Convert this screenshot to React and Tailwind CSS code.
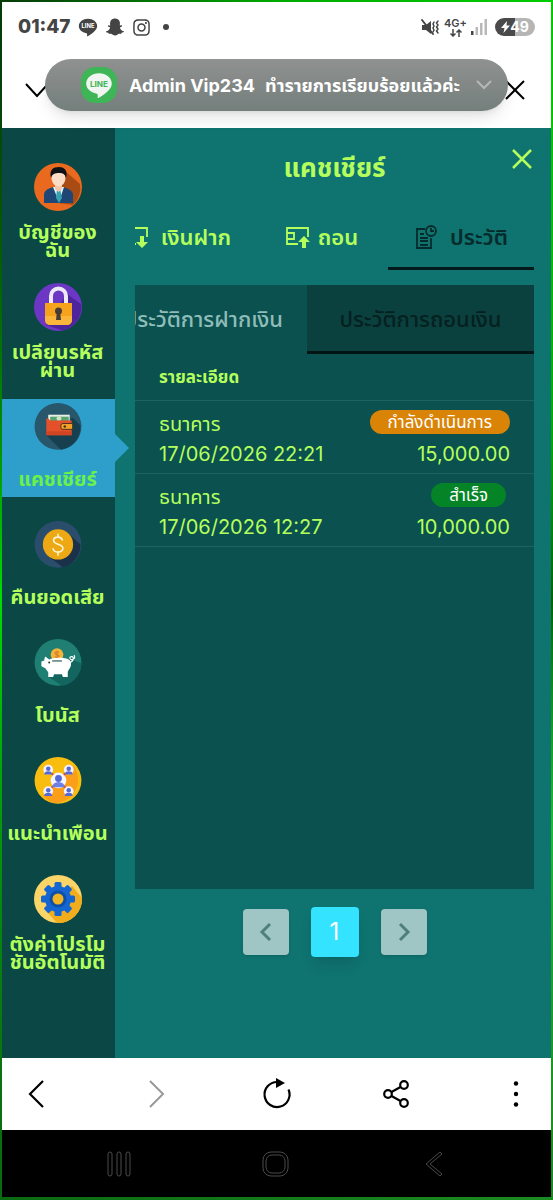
import { Fragment } from 'react'
import { FaSnapchatGhost, FaInstagram } from 'react-icons/fa'

const AccountIcon = () => (
  <svg className="w-12 h-12" viewBox="0 0 48 48">
    <circle cx="24" cy="24" r="24" fill="#e96a1f" />
    <path d="M30 7l16 14a24 24 0 0 1-7 21L16 39z" fill="#a94c13" />
    <path d="M10 40v-8c0-4 3-6 9-8h10c6 2 10 4 10 8v8z" fill="#1f4775" />
    <path d="M19 24h11l-5 15z" fill="#e7f3f5" />
    <path d="M23 26h3l2 9-3 5-3-5z" fill="#35a2b4" />
    <path d="M21 20h7v6l-3.500 3-3.500-3z" fill="#f1c6a8" />
    <ellipse cx="24.500" cy="15" rx="7" ry="8.500" fill="#fbdcc4" />
    <path d="M17 15c-2-8 2-11 8-11s9 4 7 11c-1-4-3-5-7-5s-7 1-8 5z" fill="#0d1114" />
  </svg>
)

const LockIcon = () => (
  <svg className="w-12 h-12" viewBox="0 0 48 48">
    <circle cx="24" cy="24" r="24" fill="#6b37c4" />
    <path d="M33 11l14 10a24 24 0 0 1-18 26.500L12 42z" fill="#4d249c" />
    <path d="M17 22v-9a7.500 7.500 0 0 1 15 0v9" fill="none" stroke="#ece9f5" strokeWidth="4" />
    <path d="M11 20h27v16c0 4-2 6-6 6H17c-4 0-6-2-6-6z" fill="#f5a31c" />
    <path d="M11 33h27v3c0 4-2 6-6 6H17c-4 0-6-2-6-6z" fill="#fbb53a" />
    <circle cx="24.500" cy="28" r="3.500" fill="#463b35" />
    <path d="M23 28h3l1 9h-5z" fill="#463b35" />
  </svg>
)

const WalletIcon = () => (
  <svg className="w-12 h-12" viewBox="0 0 48 48">
    <circle cx="24" cy="24" r="24" fill="#28566a" />
    <path d="M12 33l27-18 8 8a24 24 0 0 1-20 25z" fill="#16404f" />
    <path d="M14 12h22v8H14z" fill="#e9f0e4" />
    <path d="M16 14h19v5H16z" fill="#5ba36e" />
    <circle cx="25" cy="16" r="2.500" fill="#cfe3c7" />
    <path d="M12 16h2l2 2h22v15H13c-1 0-1-1-1-1z" fill="#e4502a" />
    <path d="M12 29h26v4H12z" fill="#cf4422" />
    <path d="M29 21h10v6H29a2 2 0 0 1-2-2v-2a2 2 0 0 1 2-2z" fill="#f0a229" stroke="#54301c" strokeWidth="1" />
    <circle cx="31" cy="24" r="1.300" fill="#54301c" />
  </svg>
)

const CoinIcon = () => (
  <svg className="w-12 h-12" viewBox="0 0 48 48">
    <circle cx="24" cy="24" r="24" fill="#2b4d6c" />
    <path d="M36 14l11 10a24 24 0 0 1-18 23.500L14 36z" fill="#1a3149" />
    <circle cx="24" cy="24" r="15.500" fill="#eda914" />
    <path
      d="M28.500 19.500c-.8-2-2.300-3-4.500-3-2.600 0-4.500 1.300-4.500 3.500 0 5 9.500 2.500 9.500 8 0 2.300-2 3.800-5 3.800-2.800 0-4.500-1.200-5-3.300M24 13.500v3M24 32v3"
      fill="none"
      stroke="#fff4d6"
      strokeWidth="1.600"
      strokeLinecap="round"
    />
  </svg>
)

const PiggyIcon = () => (
  <svg className="w-12 h-12" viewBox="0 0 48 48">
    <circle cx="24" cy="24" r="24" fill="#1f7f73" />
    <path d="M36 20l12 5a24 24 0 0 1-20 23l-15-10z" fill="#13665f" />
    <circle cx="23" cy="16" r="6.500" fill="#f2b53a" />
    <path
      d="M25 14c-1-1.500-4-1.200-4 .5 0 2 4 1 4 3 0 1.800-3.500 1.800-4.200.3M23 12v8"
      fill="none"
      stroke="#d9792a"
      strokeWidth="1.100"
    />
    <path
      d="M11 18l4 3c3-2 16-3 20 0 3 2 3 6 1 9-1 2-2 3-2 4v5h-5l-1-3h-8l-1 3h-5v-5l-3-4-4-2v-5l3-1c0-1 0-2 1-4z"
      fill="#ffffff"
    />
    <path d="M18 22.500h10" stroke="#2a5a54" strokeWidth="1.200" />
    <circle cx="15" cy="24" r="1" fill="#1d2e2c" />
    <path d="M35 24c5 0 6-6 3-6s-2 4 1 3 2-3 1.500-4.500" fill="none" stroke="#ffffff" strokeWidth="1.200" />
  </svg>
)

const friendNodes = [
  { x: 14, y: 13 },
  { x: 35, y: 13 },
  { x: 14, y: 35 },
  { x: 35, y: 35 }
]

const FriendsIcon = () => (
  <svg className="w-12 h-12" viewBox="0 0 48 48">
    <circle cx="24" cy="24" r="24" fill="#f9bd10" />
    <path d="M40 9a24 24 0 0 1-22 38L8 40z" fill="#fb9f1a" />
    <path d="M14 13l21 22M35 13L14 35" stroke="#d64a35" strokeWidth="2" />
    {friendNodes.map((n) => (
      <g key={`${n.x}-${n.y}`}>
        <circle cx={n.x} cy={n.y} r="5" fill="#f5f3fb" />
        <circle cx={n.x} cy={n.y - 1} r="2.300" fill="#5468d6" />
        <path d={`M${n.x - 4} ${n.y + 5}a4 3.500 0 0 1 8 0z`} fill="#5468d6" />
      </g>
    ))}
    <circle cx="24.500" cy="24" r="8" fill="#f5f3fb" />
    <circle cx="24.500" cy="22" r="3.500" fill="#5468d6" />
    <path d="M18 31a6.500 5.500 0 0 1 13 0z" fill="#6f7fe8" />
  </svg>
)

const GearIcon = () => (
  <svg className="w-12 h-12" viewBox="0 0 48 48">
    <circle cx="24" cy="24" r="24" fill="#fbd567" />
    <path d="M38 11l10 12a24 24 0 0 1-25 25l-9-10z" fill="#f2ad1c" />
    <g fill="#1467d2">
      <circle cx="24" cy="24" r="13" />
      {[0, 45, 90, 135].map((a) => (
        <rect key={a} x="20.500" y="7" width="7" height="34" rx="1.500" transform={`rotate(${a} 24 24)`} />
      ))}
    </g>
    <circle cx="24" cy="24" r="8.500" fill="#0d4fa9" />
    <circle cx="24" cy="24" r="5.500" fill="#f0b323" />
  </svg>
)

const menuItems = [
  { icon: AccountIcon, lines: ['บัญชีของ', 'ฉัน'] },
  { icon: LockIcon, lines: ['เปลียนรหัส', 'ผ่าน'] },
  { icon: WalletIcon, lines: ['แคชเชียร์'], active: true },
  { icon: CoinIcon, lines: ['คืนยอดเสีย'] },
  { icon: PiggyIcon, lines: ['โบนัส'] },
  { icon: FriendsIcon, lines: ['แนะนำเพือน'] },
  { icon: GearIcon, lines: ['ตังค่าโปรโม', 'ชันอัตโนมัติ'] }
]

const transactions = [
  { bank: 'ธนาคาร', date: '17/06/2026 22:21', status: 'กำลังดำเนินการ', amount: '15,000.00', pending: true },
  { bank: 'ธนาคาร', date: '17/06/2026 12:27', status: 'สำเร็จ', amount: '10,000.00', pending: false }
]

const LineBubble = ({ className, bubble, text }) => (
  <svg className={className} viewBox="0 0 24 24">
    <path d="M12 2C6 2 1 5.800 1 10.800c0 4.300 3.800 7.800 9 8.600 1.200.3 1 1 .8 3.100 0 .7.600.8 1.200.4C15 21 23 16.500 23 10.800 23 5.800 18 2 12 2z" fill={bubble} />
    <text x="12" y="13.500" textAnchor="middle" fontSize="7" fontWeight="700" fontFamily="Inter, sans-serif" fill={text}>
      LINE
    </text>
  </svg>
)

const StatusBar = () => (
  <div className="flex items-center justify-between h-[50px] pl-4 pr-4 text-[#444444]">
    <div className="flex items-center gap-2">
      <span className="text-[19px] font-extrabold">01:47</span>
      <LineBubble className="w-5 h-5" bubble="#444444" text="#ffffff" />
      <FaSnapchatGhost className="w-[18px] h-[18px]" />
      <FaInstagram className="w-[19px] h-[19px]" />
      <span className="w-[6px] h-[6px] ml-1 rounded-full bg-[#444444]" />
    </div>
    <div className="flex items-center gap-1">
      <svg className="w-5 h-5" viewBox="0 0 20 20" fill="none" stroke="currentColor" strokeLinecap="round">
        <path d="M2 8v5h4l5 4V4L6 8z" fill="currentColor" stroke="none" />
        <path d="M2 3l11 14" strokeWidth="2" />
        <path d="M14 5l-1 2 1 2-1 2 1 2-1 2M18 4l-1.500 2L18 8l-1.500 2L18 12l-1.500 2 1.500 2" strokeWidth="1.500" />
      </svg>
      <div className="flex flex-col items-center">
        <span className="text-[11px] leading-[11px] font-semibold">4G+</span>
        <svg className="w-3 h-2" viewBox="0 0 12 8" fill="none" stroke="currentColor" strokeWidth="1.500">
          <path d="M3 0v7M.5 4.500L3 7l2.500-2.500M9 8V1M6.500 3.500L9 1l2.500 2.500" />
        </svg>
      </div>
      <svg className="w-4 h-4" viewBox="0 0 16 16">
        <path d="M0 12h2.500v4H0z" fill="#444444" />
        <path d="M4.500 8H7v8H4.500zM9 4h2.500v12H9zM13.500 0H16v16h-2.500z" fill="#b9b9b9" />
      </svg>
      <div className="flex items-center justify-center w-10 h-[18px] ml-1 rounded-full bg-linear-to-r from-[#4a4a4a] from-50% to-[#b5b5b5] to-50% text-white">
        <svg className="w-[9px] h-3" viewBox="0 0 9 12" fill="currentColor">
          <path d="M6 0L0 7h3.500L2.500 12 9 4.500H5.500z" />
        </svg>
        <span className="text-[14px] leading-[18px] font-bold">49</span>
      </div>
    </div>
  </div>
)

const BrowserHeader = () => (
  <header className="relative bg-white">
    <StatusBar />
    <div className="flex items-center justify-between h-[76px] pl-[22px] pr-[26px]">
      <button aria-label="Minimise">
        <svg className="w-6 h-6 stroke-black" viewBox="0 0 24 24" fill="none" strokeWidth="2">
          <path d="M2 6l11 12L24 6" />
        </svg>
      </button>
      <button aria-label="Close page">
        <svg className="w-5 h-5 stroke-black" viewBox="0 0 20 20" fill="none" strokeWidth="2">
          <path d="M1 1l18 18M19 1L1 19" />
        </svg>
      </button>
    </div>
    <div className="absolute left-[43px] right-[43px] top-[57px] flex items-center h-[52px] pl-9 pr-4 rounded-full bg-linear-to-b from-[#909191] to-[#747f7c] shadow-lg text-white">
      <span className="flex shrink-0 items-center justify-center w-9 h-9 mr-3 rounded-[14px] bg-[#3eb556]">
        <LineBubble className="w-7 h-7" bubble="#f1f5f1" text="#3eb556" />
      </span>
      <span className="flex flex-1 justify-between text-[18px] font-bold whitespace-nowrap">
        <span>Admin Vip234</span>
        <span>ทำรายการเรียบร้อยแล้วค่ะ</span>
      </span>
      <svg className="w-4 h-4 ml-4 stroke-[#b4b9b8]" viewBox="0 0 16 16" fill="none" strokeWidth="2">
        <path d="M1 4l7 7 7-7" />
      </svg>
    </div>
  </header>
)

const Sidebar = () => (
  <nav className="flex flex-col shrink-0 gap-5 w-[113px] pt-[31px] bg-[#0a4745]">
    {menuItems.map((item) => (
      <a
        key={item.lines[0]}
        href="#"
        className={`relative flex flex-col items-center pt-1 pr-[2px] ${
          item.active ? 'bg-[#2d9fca] text-[#6cf04a]' : 'text-[#b4ff5c]'
        } ${item.lines.length > 1 ? 'h-[100px]' : 'h-[98px]'}`}
      >
        <item.icon />
        <span className="flex items-center h-9 mt-3 text-[20px] leading-[18px] font-bold text-center whitespace-nowrap">
          <span>
            {item.lines.map((line, i) => (
              <Fragment key={line}>
                {i > 0 ? <br /> : null}
                {line}
              </Fragment>
            ))}
          </span>
        </span>
        {item.active ? (
          <svg className="absolute left-full top-[35px] w-[14px] h-7" viewBox="0 0 14 28">
            <path d="M0 0l14 14L0 28z" fill="#2d9fca" />
          </svg>
        ) : null}
      </a>
    ))}
  </nav>
)

const DepositIcon = () => (
  <svg className="w-6 h-6" viewBox="0 0 24 24" fill="none" stroke="currentColor" strokeWidth="1.800">
    <path d="M11 19H1V3h21v9M1 8h7v6H1" />
    <path d="M15 11h4v6h4l-6 6-6-6h4z" fill="currentColor" stroke="none" />
  </svg>
)

const WithdrawIcon = () => (
  <svg className="w-6 h-6" viewBox="0 0 24 24" fill="none" stroke="currentColor" strokeWidth="1.800">
    <path d="M12 19H1V3h21v9M1 8h7v6H1" />
    <path d="M16 23h4v-6h4l-6-6-6 6h4z" fill="currentColor" stroke="none" />
  </svg>
)

const HistoryIcon = () => (
  <svg className="w-6 h-6" viewBox="0 0 24 24" fill="none" stroke="currentColor" strokeWidth="1.800">
    <path d="M11 4H3v19h14V13M6 9h4M6 13h8M6 16h8M6 20h8" />
    <circle cx="17" cy="6" r="5" />
    <path d="M17 3v3h3" />
  </svg>
)

const Tabs = () => (
  <div className="flex justify-end h-[66px] mt-4 overflow-hidden text-[22px] font-semibold" role="tablist">
    <button role="tab" className="flex shrink-0 items-center justify-center gap-3 w-[156px] text-[#b4ff5c]">
      <DepositIcon />
      เงินฝาก
    </button>
    <button role="tab" className="flex shrink-0 items-center justify-center gap-2 w-[132px] text-[#b4ff5c]">
      <WithdrawIcon />
      ถอน
    </button>
    <button
      role="tab"
      aria-selected="true"
      className="flex shrink-0 items-center justify-center gap-3 w-[146px] border-t-3 border-b-3 border-t-transparent border-b-[#04191a] text-[#062b2c]"
    >
      <HistoryIcon />
      ประวัติ
    </button>
  </div>
)

const HistoryPanel = () => (
  <section className="flex flex-col flex-1 min-h-[603px] mt-[15px] bg-[#0b514f]">
    <div className="flex justify-end h-[69px] overflow-hidden text-[22px] font-medium whitespace-nowrap" role="tablist">
      <button role="tab" className="shrink-0 px-6 text-[#8fbdb9]">
        ประวัติการฝากเงิน
      </button>
      <button
        role="tab"
        aria-selected="true"
        className="shrink-0 w-[227px] border-t-3 border-b-3 border-t-[#0a413f] border-b-[#031414] bg-[#0a413f] text-[#05201f]"
      >
        ประวัติการถอนเงิน
      </button>
    </div>
    <table className="w-full text-[20px] leading-[30px] text-[#b4ff5c]">
      <thead>
        <tr className="border-b border-[#1b6461]">
          <th colSpan={2} className="h-[46px] px-6 text-left text-[17px] font-bold">
            รายละเอียด
          </th>
        </tr>
      </thead>
      <tbody>
        {transactions.map((t) => (
          <tr key={t.date} className="border-b border-[#1b6461]">
            <td className="h-[73px] pt-1 pl-6">
              <div>{t.bank}</div>
              <div className="whitespace-nowrap">{t.date}</div>
            </td>
            <td className="pt-1 pr-6">
              <div className="flex items-center justify-end h-[30px] pb-1">
                <span
                  className={`flex items-center h-6 px-[18px] rounded-full text-[17px] text-white whitespace-nowrap ${
                    t.pending ? 'bg-[#d98307]' : 'mr-1 bg-[#058427]'
                  }`}
                >
                  {t.status}
                </span>
              </div>
              <div className="text-right">{t.amount}</div>
            </td>
          </tr>
        ))}
      </tbody>
    </table>
  </section>
)

const Pagination = () => (
  <div className="flex items-center justify-center gap-[22px] h-[50px] mt-[18px]">
    <button aria-label="Previous" className="flex items-center justify-center w-[46px] h-[46px] rounded bg-[#9fc6c4] shadow">
      <svg className="w-5 h-5 stroke-[#4f7f7d]" viewBox="0 0 20 20" fill="none" strokeWidth="3">
        <path d="M14 2l-8 8 8 8" />
      </svg>
    </button>
    <button className="w-12 h-[50px] rounded bg-[#33e3ff] text-[24px] text-white shadow-lg">1</button>
    <button aria-label="Next" className="flex items-center justify-center w-[46px] h-[46px] rounded bg-[#9fc6c4] shadow">
      <svg className="w-5 h-5 stroke-[#4f7f7d]" viewBox="0 0 20 20" fill="none" strokeWidth="3">
        <path d="M6 2l8 8-8 8" />
      </svg>
    </button>
  </div>
)

const Cashier = () => (
  <main className="flex flex-col flex-1 min-w-0 pl-5 pr-[17px] pt-5 pb-[101px] bg-[#0f7370]">
    <div className="grid grid-cols-[1fr_auto_1fr] h-10 text-[#b4ff5c]">
      <h1 className="col-start-2 self-center text-[26px] leading-10 font-bold">แคชเชียร์</h1>
      <button aria-label="Close" className="justify-self-end self-start">
        <svg className="w-[22px] h-[22px]" viewBox="0 0 22 22" fill="none" stroke="currentColor" strokeWidth="2.500">
          <path d="M1 2l18 18M19 2L1 20" />
        </svg>
      </button>
    </div>
    <Tabs />
    <HistoryPanel />
    <Pagination />
  </main>
)

const BrowserToolbar = () => (
  <div className="flex items-center justify-between h-[72px] px-[19px] bg-white">
    <button aria-label="Back" className="flex justify-center w-8">
      <svg className="w-7 h-7 stroke-black" viewBox="0 0 28 28" fill="none" strokeWidth="2.200">
        <path d="M20 1L7 14l13 13" />
      </svg>
    </button>
    <button aria-label="Forward" className="flex justify-center w-8">
      <svg className="w-7 h-7 stroke-[#999999]" viewBox="0 0 28 28" fill="none" strokeWidth="2">
        <path d="M7 1l13 13L7 27" />
      </svg>
    </button>
    <button aria-label="Reload" className="flex justify-center w-8">
      <svg className="w-8 h-8 stroke-black" viewBox="0 0 32 32" fill="none" strokeWidth="2.200">
        <path d="M16 4A12.500 12.500 0 1 0 27.500 11.500" />
        <path d="M15 0l9 5-9 5z" fill="#000000" stroke="none" />
      </svg>
    </button>
    <button aria-label="Share" className="flex justify-center w-8">
      <svg className="w-7 h-7 stroke-black" viewBox="0 0 28 28" fill="none" strokeWidth="2.200">
        <circle cx="6" cy="14" r="3.800" />
        <circle cx="22" cy="5" r="3.800" />
        <circle cx="22" cy="23" r="3.800" />
        <path d="M9.500 12l9-5M9.500 16l9 5" />
      </svg>
    </button>
    <button aria-label="More" className="flex justify-center w-8">
      <svg className="w-6 h-7" viewBox="0 0 24 28">
        <circle cx="12" cy="3.500" r="2.200" />
        <circle cx="12" cy="14" r="2.200" />
        <circle cx="12" cy="24.500" r="2.200" />
      </svg>
    </button>
  </div>
)

const SystemNav = () => (
  <div className="flex items-center justify-around h-[67px] px-10 bg-black">
    <button aria-label="Recents">
      <svg className="w-7 h-7 stroke-[#4a4a4a]" viewBox="0 0 28 28" fill="none">
        <rect x="2" y="2" width="4" height="24" rx="2" />
        <rect x="11" y="2" width="4" height="24" rx="2" />
        <rect x="20" y="2" width="4" height="24" rx="2" />
      </svg>
    </button>
    <button aria-label="Home">
      <svg className="w-7 h-7 stroke-[#4a4a4a]" viewBox="0 0 28 28" fill="none">
        <rect x="1" y="2" width="25" height="24" rx="8" />
        <rect x="4" y="5" width="19" height="18" rx="6" />
      </svg>
    </button>
    <button aria-label="System back">
      <svg className="w-7 h-7 stroke-[#4a4a4a]" viewBox="0 0 28 28" fill="none" strokeLinejoin="round">
        <path d="M21 2L7 14l14 12 2-2-12-10L23 4z" />
      </svg>
    </button>
  </div>
)

const App = () => {
  return (
    <div className="flex flex-col min-h-screen pl-[2px] pr-[2px] pt-[2px] pb-[3px] bg-[conic-gradient(#0a0_0deg,#0c0_25deg,#0a0_60deg,#060_90deg,#1ac030_130deg,#1a8c20_155deg,#0a6a12_205deg,#0d0_270deg,#063a08_335deg,#0a0_360deg)] font-['Inter','Noto_Sans_Thai','Noto_Sans',sans-serif]">
      <BrowserHeader />
      <div className="flex flex-1">
        <Sidebar />
        <Cashier />
      </div>
      <BrowserToolbar />
      <SystemNav />
    </div>
  )
}

export default App
